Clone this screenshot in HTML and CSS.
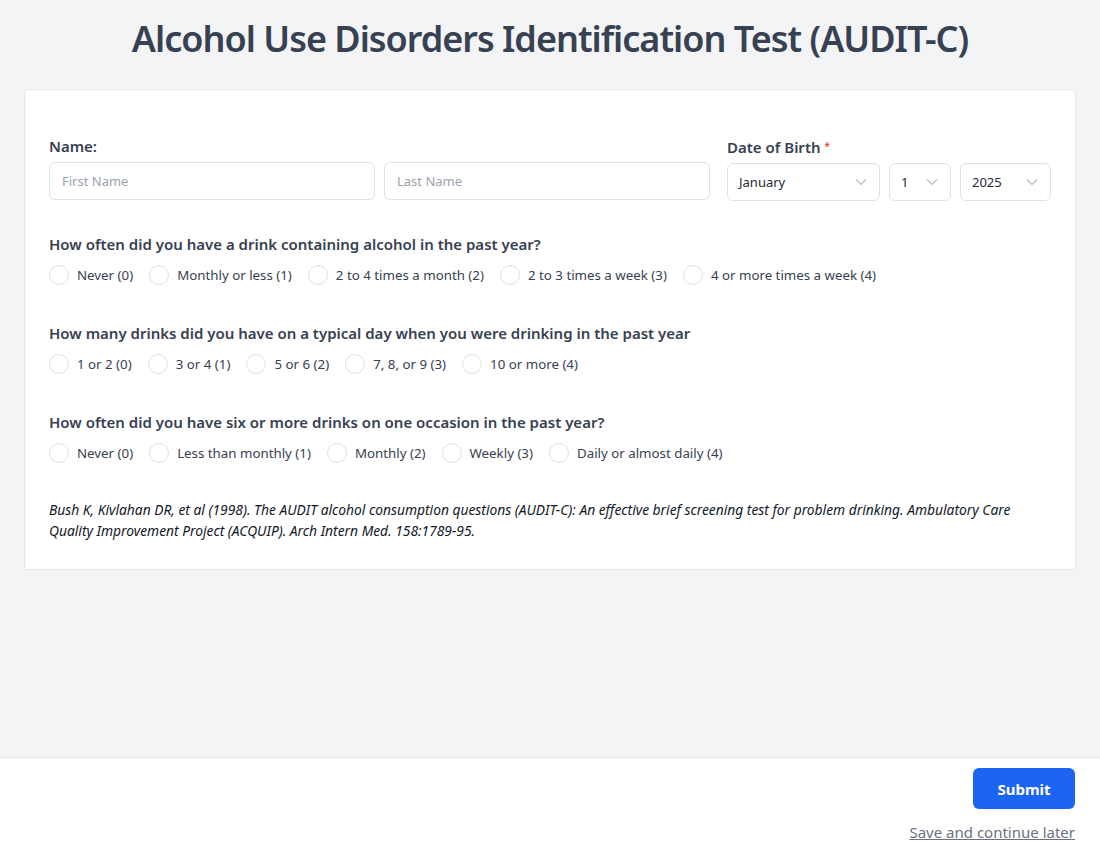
FILE: index.html
```html
<!DOCTYPE html>
<html lang="en">
<head>
<meta charset="utf-8">
<title>AUDIT-C</title>
<link rel="stylesheet" href="styles.css">
</head>
<body>
<main class="main">
  <h1 class="title">Alcohol Use Disorders Identification Test (AUDIT-C)</h1>
  <section class="card">
    <div class="top-row">
      <div class="name-group">
        <div class="label">Name:</div>
        <div class="name-inputs">
          <input class="input" type="text" placeholder="First Name">
          <input class="input" type="text" placeholder="Last Name">
        </div>
      </div>
      <div class="dob-group">
        <div class="label">Date of Birth <span class="req">*</span></div>
        <div class="dob-selects">
          <div class="select month"><span>January</span><svg class="chev" viewBox="0 0 12 8" width="12" height="8"><path d="M1 1.5l5 5 5-5" fill="none" stroke="#b6bac2" stroke-width="1.1"/></svg></div>
          <div class="select day"><span>1</span><svg class="chev" viewBox="0 0 12 8" width="12" height="8"><path d="M1 1.5l5 5 5-5" fill="none" stroke="#b6bac2" stroke-width="1.1"/></svg></div>
          <div class="select year"><span>2025</span><svg class="chev" viewBox="0 0 12 8" width="12" height="8"><path d="M1 1.5l5 5 5-5" fill="none" stroke="#b6bac2" stroke-width="1.1"/></svg></div>
        </div>
      </div>
    </div>

    <div class="question">
      <div class="q-text">How often did you have a drink containing alcohol in the past year?</div>
      <div class="options">
        <label class="opt"><span class="radio"></span>Never (0)</label>
        <label class="opt"><span class="radio"></span>Monthly or less (1)</label>
        <label class="opt"><span class="radio"></span>2 to 4 times a month (2)</label>
        <label class="opt"><span class="radio"></span>2 to 3 times a week (3)</label>
        <label class="opt"><span class="radio"></span>4 or more times a week (4)</label>
      </div>
    </div>

    <div class="question">
      <div class="q-text">How many drinks did you have on a typical day when you were drinking in the past year</div>
      <div class="options">
        <label class="opt"><span class="radio"></span>1 or 2 (0)</label>
        <label class="opt"><span class="radio"></span>3 or 4 (1)</label>
        <label class="opt"><span class="radio"></span>5 or 6 (2)</label>
        <label class="opt"><span class="radio"></span>7, 8, or 9 (3)</label>
        <label class="opt"><span class="radio"></span>10 or more (4)</label>
      </div>
    </div>

    <div class="question">
      <div class="q-text">How often did you have six or more drinks on one occasion in the past year?</div>
      <div class="options">
        <label class="opt"><span class="radio"></span>Never (0)</label>
        <label class="opt"><span class="radio"></span>Less than monthly (1)</label>
        <label class="opt"><span class="radio"></span>Monthly (2)</label>
        <label class="opt"><span class="radio"></span>Weekly (3)</label>
        <label class="opt"><span class="radio"></span>Daily or almost daily (4)</label>
      </div>
    </div>

    <p class="citation">Bush K, Kivlahan DR, et al (1998). The AUDIT alcohol consumption questions (AUDIT-C): An effective brief screening test for problem drinking. Ambulatory Care Quality Improvement Project (ACQUIP). Arch Intern Med. 158:1789-95.</p>
  </section>
</main>
<footer class="footer">
  <button class="submit" type="button">Submit</button>
  <a class="save" href="#">Save and continue later</a>
</footer>
</body>
</html>
```

FILE: styles.css
```css
* { box-sizing: border-box; }
html, body { margin: 0; padding: 0; }
body {
  background: #f3f4f6;
  font-family: "Noto Sans", "Open Sans", sans-serif;
  color: #374151;
  min-height: 100vh;
  display: flex;
  flex-direction: column;
}
.main {
  flex: 1;
  padding: 0 24px;
}
.title {
  margin: 0;
  padding: 13px 0 24px;
  text-align: center;
  font-size: 36px;
  line-height: 52px;
  font-weight: 600;
  letter-spacing: -1px;
  color: #374151;
}
.card {
  background: #fff;
  border: 1px solid #e5e7eb;
  border-radius: 4px;
  padding: 46px 24px 28px;
}
.top-row {
  display: flex;
  gap: 17px;
}
.name-group { width: 661px; }
.dob-group { flex: 1; }
.label {
  font-size: 15px;
  font-weight: 600;
  line-height: 20px;
  margin-bottom: 6px;
  color: #374151;
}
.req { color: #ef4444; font-size: 10px; vertical-align: 3px; }
.name-inputs { display: flex; gap: 9px; }
.input {
  flex: 1;
  min-width: 0;
  height: 38px;
  border: 1px solid #dfe1e6;
  border-radius: 6px;
  padding: 0 12px;
  font-family: inherit;
  font-size: 13px;
  color: #374151;
  outline: none;
}
.input::placeholder { color: #9ca3af; }
.dob-selects { display: flex; gap: 9px; }
.select {
  height: 38px;
  border: 1px solid #dfe1e6;
  border-radius: 6px;
  padding: 0 12px 0 11px;
  display: flex;
  align-items: center;
  justify-content: space-between;
  font-size: 13px;
  color: #1f2937;
}
.select.month { width: 153px; }
.select.day { width: 62px; }
.select.year { flex: 1; }
.chev { display: block; }
.question { margin-top: 38px; }
.top-row + .question { margin-top: 33px; }
.q-text {
  font-size: 15px;
  font-weight: 600;
  line-height: 20px;
  color: #374151;
}
.options {
  display: flex;
  gap: 16px;
  margin-top: 11px;
}
.opt {
  display: flex;
  align-items: center;
  gap: 8px;
  font-size: 13.3px;
  line-height: 20px;
  color: #374151;
}
.radio {
  width: 20px;
  height: 20px;
  border: 1px solid #dcdfe4;
  border-radius: 50%;
  background: #fff;
}
.citation {
  margin: 36px 0 0;
  font-size: 13.8px;
  line-height: 21px;
  font-style: italic;
  color: #111827;
}
.footer {
  background: #fff;
  border-top: 1px solid #e5e7eb;
  display: flex;
  flex-direction: column;
  align-items: flex-end;
  padding: 10px 25px 0;
  height: 88px;
}
.submit {
  width: 102px;
  height: 41px;
  background: #1c64f2;
  color: #fff;
  border: none;
  border-radius: 6px;
  font-family: inherit;
  font-size: 15px;
  font-weight: 700;
}
.save {
  margin-top: 13px;
  font-size: 15px;
  line-height: 20px;
  color: #6b7280;
  text-decoration: underline;
}
```
